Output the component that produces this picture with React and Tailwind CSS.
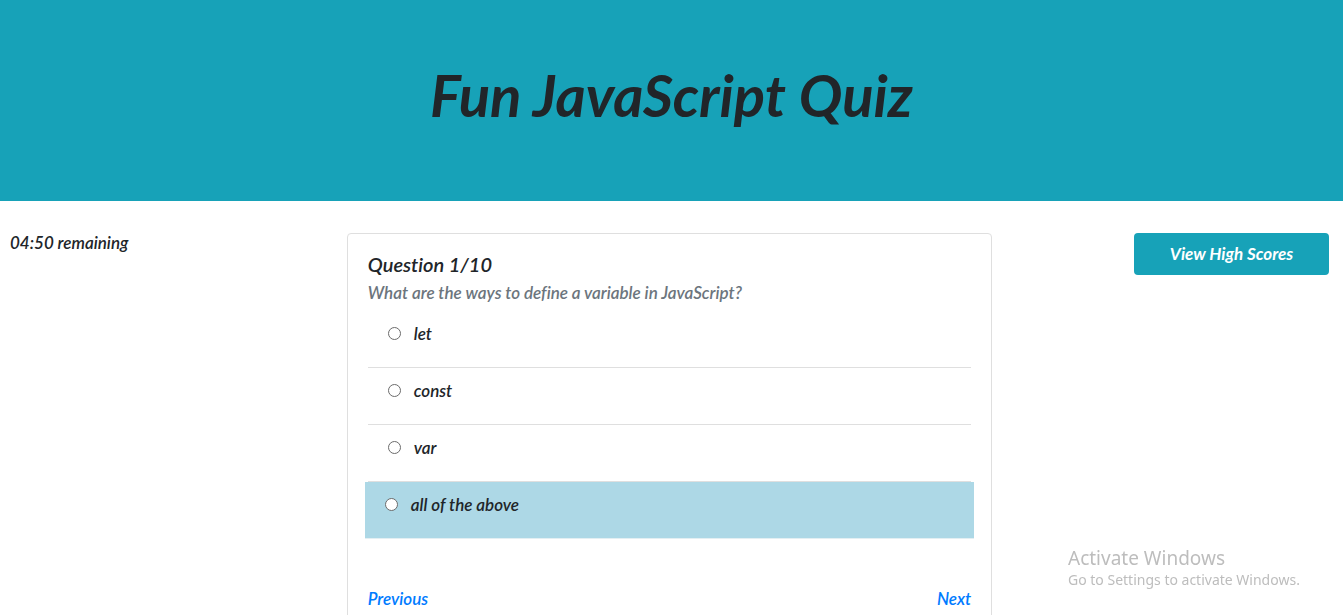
const options = ["let", "const", "var", "all of the above"];

function Option({ label, highlighted }) {
  return (
    <li
      className={
        highlighted
          ? "-mx-[3px] border-b border-[#e3eff3] bg-[#add8e6]"
          : "border-b border-[#dfdfdf]"
      }
    >
      <label className="flex h-14 items-start gap-[13px] px-5 pt-[11px] leading-6">
        <input
          type="radio"
          name="answer"
          value={label}
          className="mt-[5px] size-[13px] shrink-0 appearance-none rounded-full border border-[#6b6b6b] bg-white checked:border-4 checked:border-[#0075ff]"
        />
        <span>{label}</span>
      </label>
    </li>
  );
}

export default function App() {
  return (
    <div className="h-screen overflow-hidden bg-white font-['Lato','Liberation_Sans',sans-serif] text-[17px] font-semibold text-[#212529] italic [font-variant-ligatures:none]">
      <header className="bg-[#17a2b8] px-8 pt-[61px] pb-[72px] text-center">
        <h1 className="text-[58px] leading-[68px] font-bold">Fun JavaScript Quiz</h1>
      </header>

      <main className="grid grid-cols-[1fr_2fr_1fr] items-start gap-[14px] pt-8 pr-[14px] pl-[10px]">
        <p className="leading-5">04:50 remaining</p>

        <section className="rounded border border-[#dfdfdf] px-5 pt-[18px] pb-5">
          <h2 className="text-xl leading-6">Question 1/10</h2>
          <p className="pt-[5px] leading-6 text-[#6c757d]">
            What are the ways to define a variable in JavaScript?
          </p>
          <ul className="pt-[6px]">
            {options.map((label, i) => (
              <Option key={label} label={label} highlighted={i === 3} />
            ))}
          </ul>
          <nav className="flex justify-between pt-12 leading-6 text-[#007bff]">
            <a href="#previous">Previous</a>
            <a href="#next">Next</a>
          </nav>
        </section>

        <button
          type="button"
          className="h-[42px] w-[195px] justify-self-end rounded bg-[#17a2b8] font-bold text-white italic"
        >
          View High Scores
        </button>
      </main>

      <aside className="fixed right-[38px] bottom-[25px] w-[237px] font-['Noto_Sans','Open_Sans',sans-serif] font-normal whitespace-nowrap text-[#bdbdbd] not-italic">
        <p className="text-[19px] leading-6">Activate Windows</p>
        <p className="text-sm leading-5">Go to Settings to activate Windows.</p>
      </aside>
    </div>
  );
}
